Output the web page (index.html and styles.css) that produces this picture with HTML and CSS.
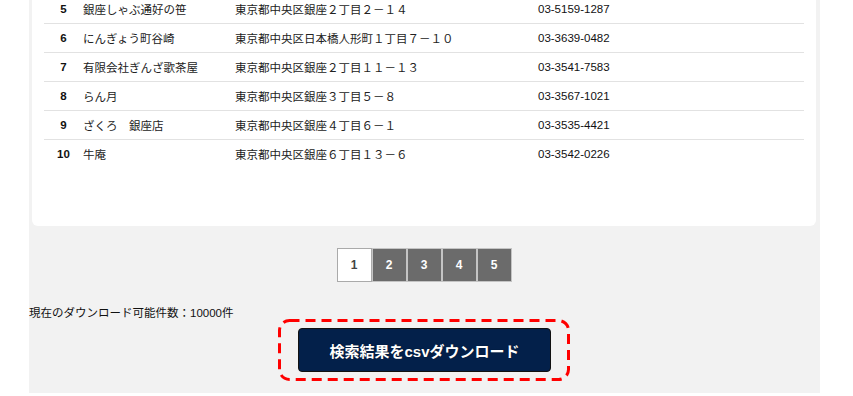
FILE: index.html
```html
<!DOCTYPE html>
<html lang="ja">
<head>
    <meta charset="UTF-8">
    <meta name="viewport" content="width=device-width, initial-scale=1.0">
    <title>検索結果</title>
    <link rel="stylesheet" href="styles.css">
</head>
<body>
    <div class="page">
        <div class="card">
            <table class="result-table">
                <tr><td class="no">5</td><td class="name">銀座しゃぶ通好の笹</td><td class="addr">東京都中央区銀座２丁目２－１４</td><td class="tel">03-5159-1287</td></tr>
                <tr><td class="no">6</td><td class="name">にんぎょう町谷崎</td><td class="addr">東京都中央区日本橋人形町１丁目７－１０</td><td class="tel">03-3639-0482</td></tr>
                <tr><td class="no">7</td><td class="name">有限会社ぎんざ歌茶屋</td><td class="addr">東京都中央区銀座２丁目１１－１３</td><td class="tel">03-3541-7583</td></tr>
                <tr><td class="no">8</td><td class="name">らん月</td><td class="addr">東京都中央区銀座３丁目５－８</td><td class="tel">03-3567-1021</td></tr>
                <tr><td class="no">9</td><td class="name">ざくろ　銀座店</td><td class="addr">東京都中央区銀座４丁目６－１</td><td class="tel">03-3535-4421</td></tr>
                <tr><td class="no">10</td><td class="name">牛庵</td><td class="addr">東京都中央区銀座６丁目１３－６</td><td class="tel">03-3542-0226</td></tr>
            </table>
        </div>

        <ul class="pager">
            <li class="current">1</li>
            <li>2</li>
            <li>3</li>
            <li>4</li>
            <li>5</li>
        </ul>

        <p class="count">現在のダウンロード可能件数：10000件</p>

        <div class="download-area">
            <div class="highlight">
                <!-- 赤い点線の枠 -->
                <svg class="highlight-frame" viewBox="0 0 292 62" width="292" height="62">
                    <rect x="1.5" y="1.5" width="289" height="59" rx="10" fill="none" stroke="#f00" stroke-width="3" stroke-dasharray="10 6"/>
                </svg>
                <button class="download-btn">検索結果をcsvダウンロード</button>
            </div>
        </div>
    </div>
</body>
</html>
```

FILE: styles.css
```css
body {
    margin: 0;
    background-color: #fff;
    font-family: "Liberation Sans", Arial, "Noto Sans CJK JP", sans-serif;
    color: #222;
}
.page {
    width: 791px;
    margin-left: 29px;
    background-color: #f2f2f2;
    padding: 0 4px 12px 3px;
    box-sizing: border-box;
}
.card {
    background-color: #fff;
    border-radius: 0 0 6px 6px;
    padding: 0 12px 58px;
    overflow: hidden;
}
.result-table {
    width: 100%;
    border-collapse: collapse;
    margin-top: -5px;
    font-size: 11.5px;
}
.result-table td {
    height: 28px;
    padding: 0;
    border-bottom: 1px solid #e2e2e2;
    vertical-align: middle;
    white-space: nowrap;
}
.result-table tr:last-child td {
    border-bottom: none;
}
.no {
    width: 39px;
    text-align: center;
    font-weight: bold;
    color: #111;
}
.name {
    width: 152px;
    font-family: "Noto Sans CJK JP", sans-serif;
}
.addr {
    width: 303px;
    font-family: "Noto Sans CJK JP", sans-serif;
}
.tel {
    color: #111;
}
.pager {
    list-style: none;
    margin: 22px 0 0;
    padding: 0;
    display: flex;
    justify-content: center;
}
.pager li {
    width: 33px;
    height: 32px;
    line-height: 32px;
    text-align: center;
    border: 1px solid #c4c4c4;
    background-color: #6b6b6b;
    color: #fff;
    font-size: 12px;
    font-weight: bold;
}
.pager li.current {
    background-color: #fff;
    color: #444;
    border-color: #aaa;
}
.count {
    margin: 25px 0 -1px -3px;
    font-size: 11.5px;
    line-height: 13px;
    font-family: "Liberation Sans", "Noto Sans CJK JP", sans-serif;
    color: #111;
}
.download-area {
    display: flex;
    justify-content: center;
}
.highlight {
    position: relative;
    width: 292px;
    height: 62px;
    box-sizing: border-box;
    padding: 9px 19px 9px 20px;
}
.highlight-frame {
    position: absolute;
    top: 0;
    left: 0;
}
.download-btn {
    position: relative;
    display: block;
    width: 253px;
    height: 44px;
    background-color: #03204a;
    border: 1px solid #111;
    border-radius: 4px;
    color: #fff;
    font-family: "Liberation Sans", "Noto Sans CJK JP", sans-serif;
    font-size: 15px;
    font-weight: bold;
    text-shadow: 0 0 1px rgba(0,0,0,0.6);
}
```
